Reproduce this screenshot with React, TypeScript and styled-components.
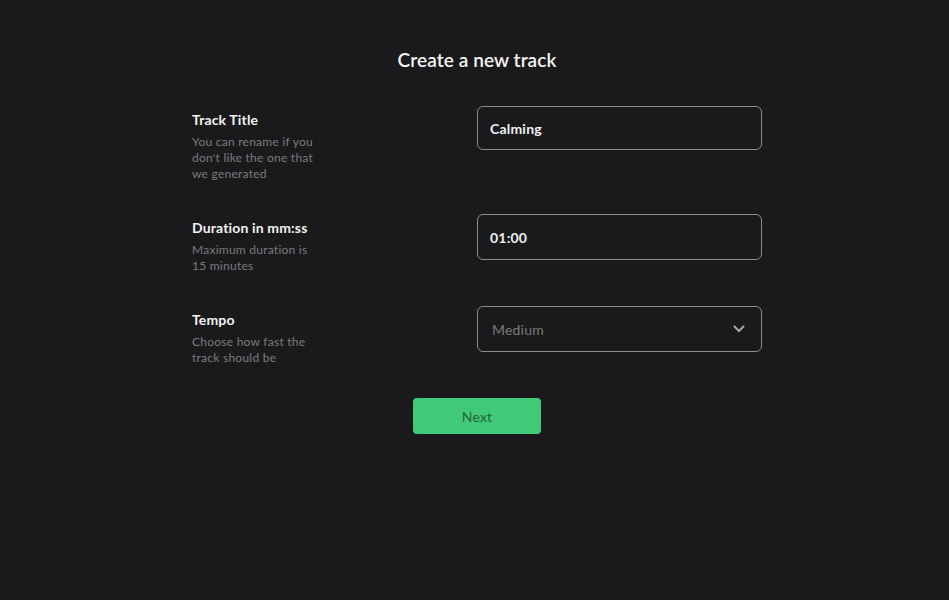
import React from "react";
import styled, { createGlobalStyle } from "styled-components";

const Global = createGlobalStyle`
  html, body { margin: 0; padding: 0; background: #1a1a1c; }
  body { font-family: Lato, "Noto Sans", sans-serif; color: #f2f2f2; }
  * { box-sizing: border-box; }
`;

const Page = styled.div`
  min-height: 600px;
  background: #1a1a1c;
  padding-top: 48px;
  display: flex;
  justify-content: center;
  padding-left: 5px;
`;

const Form = styled.div`
  width: 570px;
  display: flex;
  flex-direction: column;
  align-items: center;
`;

const Title = styled.h1`
  margin: 0 0 34px;
  font-size: 19px;
  line-height: 24px;
  font-weight: 600;
  letter-spacing: 0.1px;
  color: #f4f4f4;
`;

const Rows = styled.div`
  width: 100%;
  display: flex;
  flex-direction: column;
  gap: 32px;
`;

const Row = styled.div`
  display: grid;
  grid-template-columns: 1fr 1fr;
  align-items: start;
`;

const LabelCol = styled.div<{ $pad: number }>`
  padding-top: ${(p) => p.$pad}px;
  display: flex;
  flex-direction: column;
  gap: 6px;
`;

const Label = styled.div`
  font-size: 14px;
  line-height: 16px;
  font-weight: 700;
  letter-spacing: 0.15px;
  color: #f2f2f2;
`;

const Desc = styled.div`
  font-size: 12px;
  line-height: 16px;
  letter-spacing: 0.25px;
  color: #7b7b7d;
  max-width: 128px;
`;

const Field = styled.div<{ $h: number }>`
  height: ${(p) => p.$h}px;
  border: 1px solid #8d8d8f;
  border-radius: 6px;
  display: flex;
  align-items: center;
  justify-content: space-between;
  padding: 0 16px 0 12px;
  background: #1a1a1c;
`;

const Value = styled.span`
  font-size: 14px;
  font-weight: 700;
  letter-spacing: 0.2px;
  color: #f0f0f0;
`;

const Placeholder = styled.span`
  font-size: 14px;
  letter-spacing: 0.2px;
  color: #7a7a7c;
  padding-left: 2px;
`;

const Button = styled.button`
  margin-top: 32px;
  width: 128px;
  height: 36px;
  border: none;
  border-radius: 4px;
  background: #40ca78;
  color: #22663b;
  font-family: Lato, "Noto Sans", sans-serif;
  font-size: 14px;
  letter-spacing: 0.2px;
  cursor: pointer;
`;

const Chevron = () => (
  <svg width="12" height="8" viewBox="0 0 12 8">
    <path d="M1.5 1.5 L6 6 L10.5 1.5" fill="none" stroke="#a8a8aa" strokeWidth="2" strokeLinecap="round" strokeLinejoin="round" />
  </svg>
);

export default function App() {
  return (
    <>
      <Global />
      <Page>
        <Form>
          <Title>Create a new track</Title>
          <Rows>
            <Row>
              <LabelCol $pad={6}>
                <Label>Track Title</Label>
                <Desc>You can rename if you don't like the one that we generated</Desc>
              </LabelCol>
              <Field $h={44}>
                <Value>Calming</Value>
              </Field>
            </Row>
            <Row>
              <LabelCol $pad={6}>
                <Label>Duration in mm:ss</Label>
                <Desc>Maximum duration is 15 minutes</Desc>
              </LabelCol>
              <Field $h={46}>
                <Value>01:00</Value>
              </Field>
            </Row>
            <Row>
              <LabelCol $pad={6}>
                <Label>Tempo</Label>
                <Desc>Choose how fast the track should be</Desc>
              </LabelCol>
              <Field $h={46}>
                <Placeholder>Medium</Placeholder>
                <Chevron />
              </Field>
            </Row>
          </Rows>
          <Button>Next</Button>
        </Form>
      </Page>
    </>
  );
}
